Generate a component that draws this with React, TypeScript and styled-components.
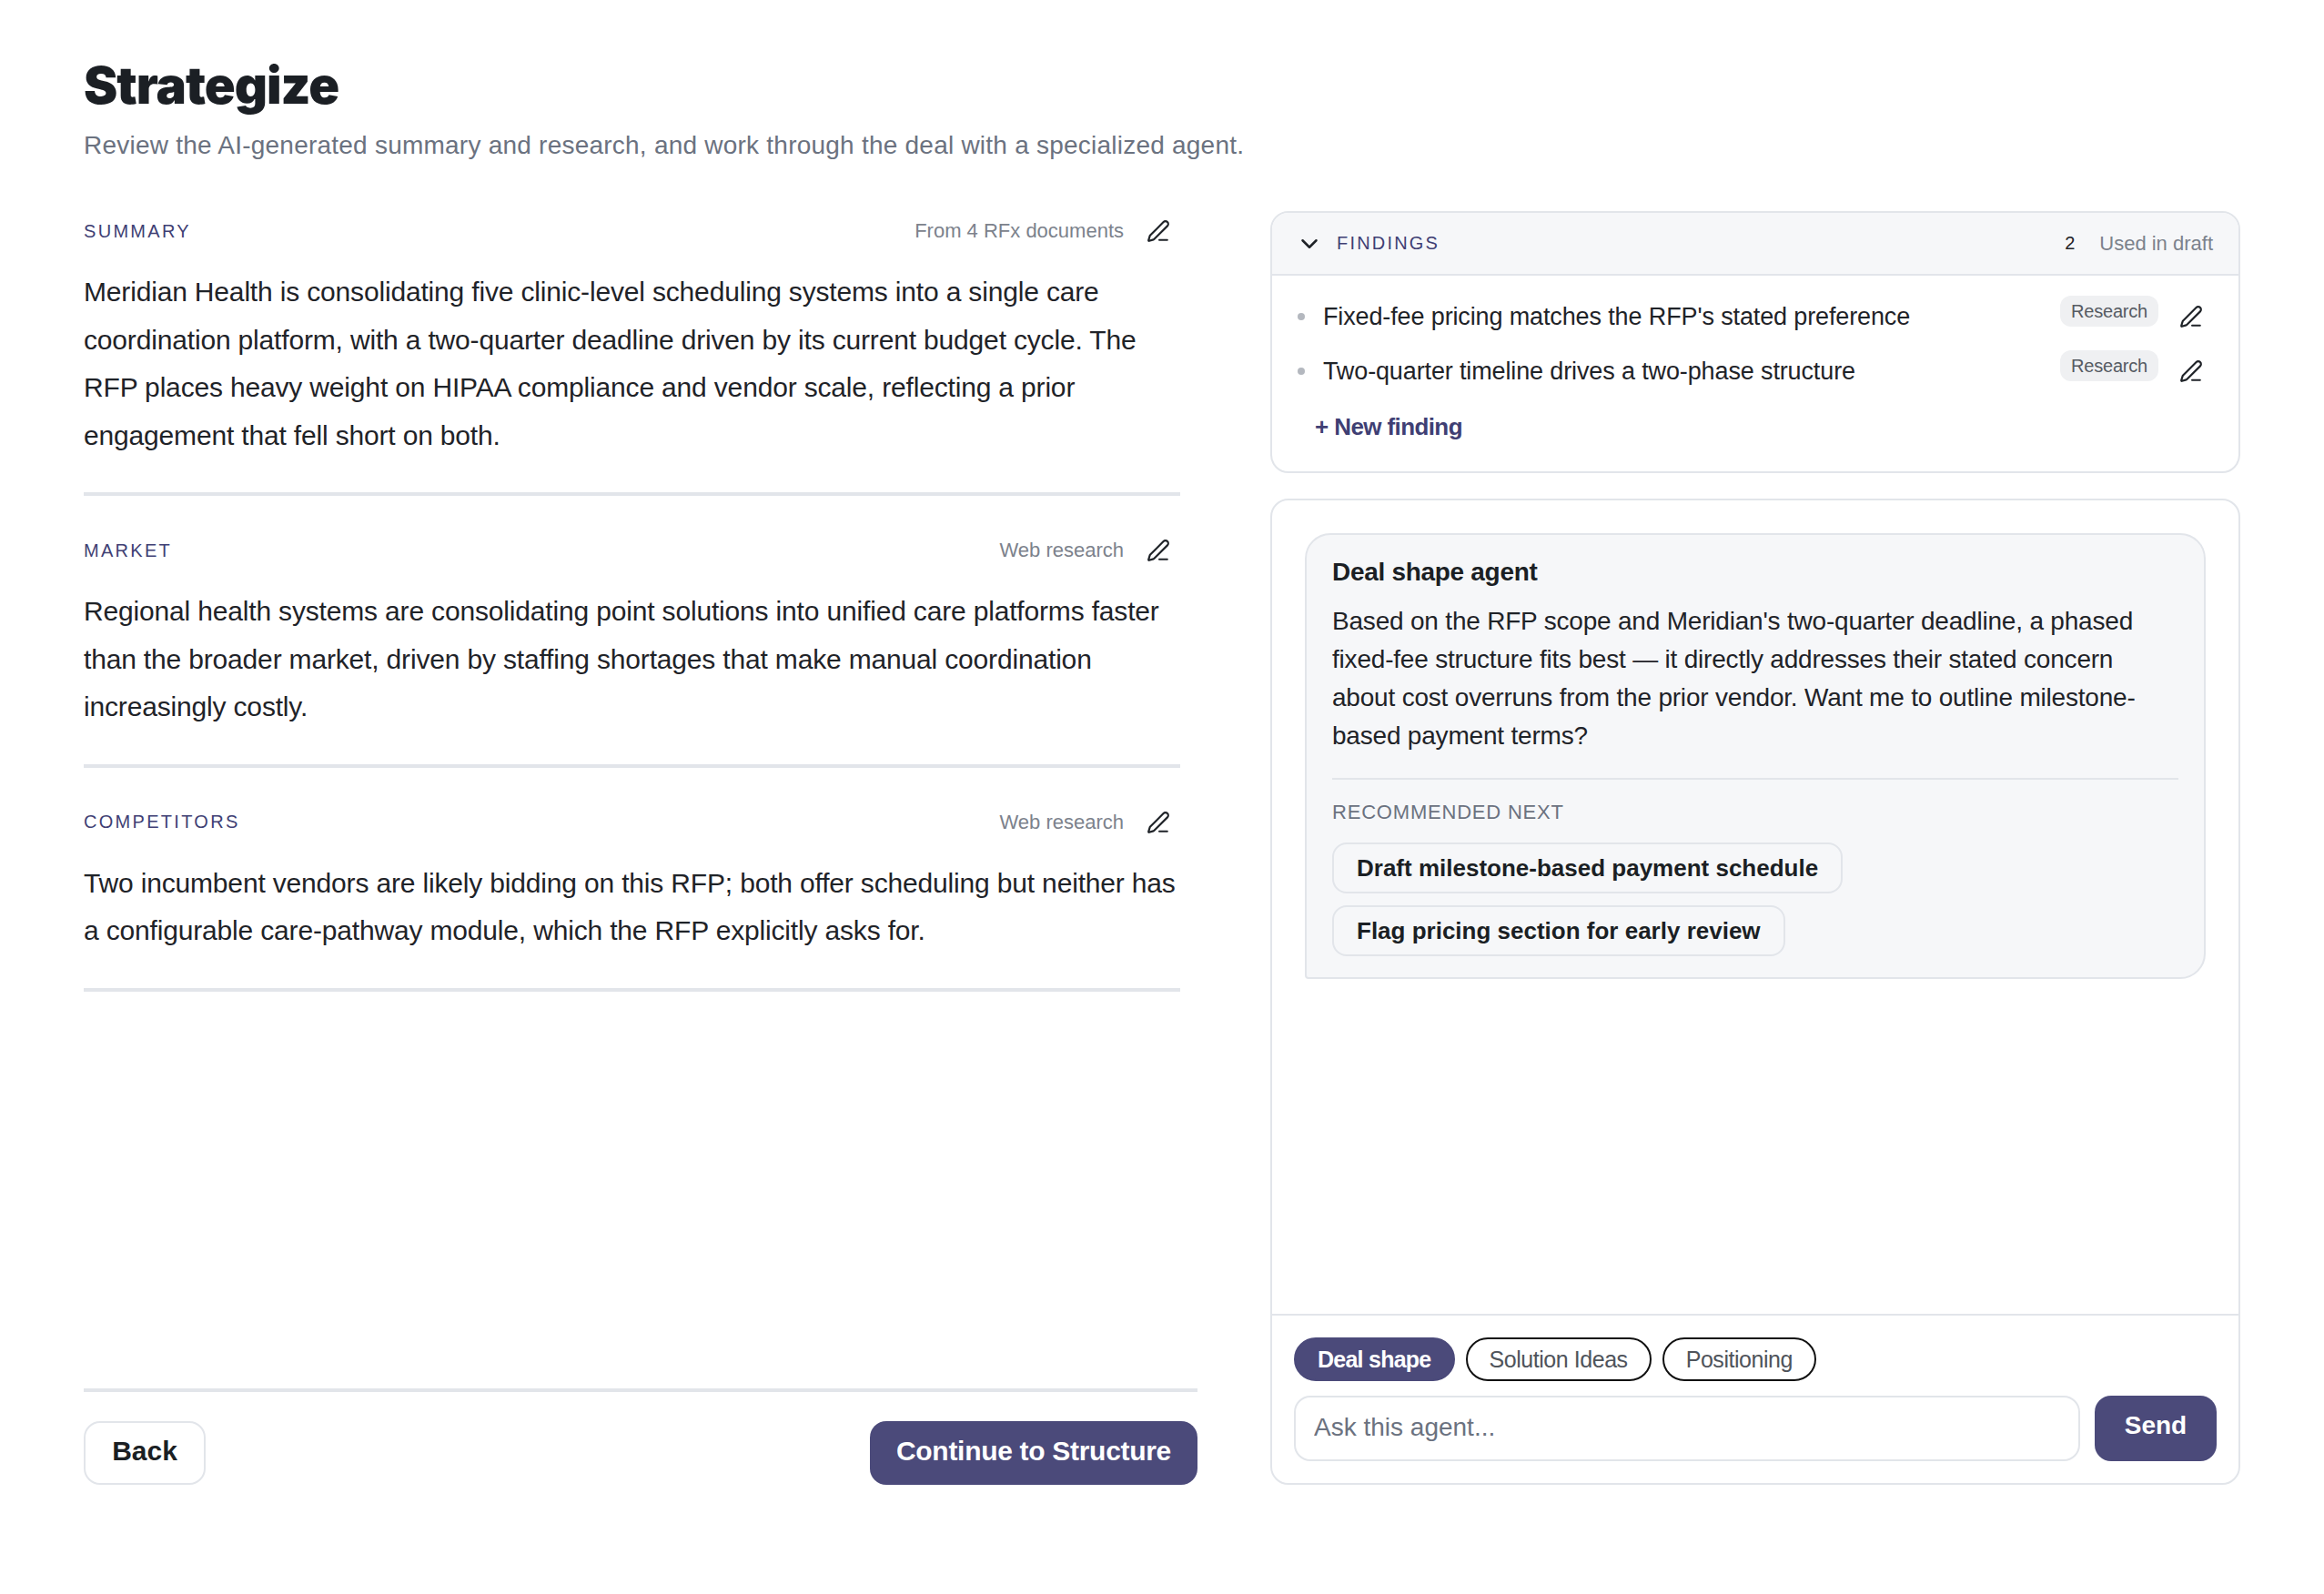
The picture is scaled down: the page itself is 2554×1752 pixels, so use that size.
import { ReactNode } from 'react';
import styled, { createGlobalStyle } from 'styled-components';
import { ChevronDown, PenLine } from 'lucide-react';

const GlobalStyle = createGlobalStyle`
  * { box-sizing: border-box; }
  html, body { margin: 0; padding: 0; background: #fff; }
  body { font-family: "Liberation Sans", Arial, sans-serif; color: #1f2328; }
  button, input { font-family: inherit; }
`;

const Page = styled.div`
  width: 2554px;
  height: 1752px;
  padding: 58px 92px 120px 92px;
  display: flex;
  flex-direction: column;
  overflow: hidden;
`;

const Title = styled.h1`
  margin: 0;
  font-family: Inter, sans-serif;
  font-size: 56px;
  font-weight: 900;
  line-height: 72px;
  letter-spacing: -1px;
  color: #1b1f24;
`;

const Subtitle = styled.p`
  margin: 8px 0 0;
  font-size: 28px;
  line-height: 44px;
  letter-spacing: 0.23px;
  color: #6b7280;
`;

const Columns = styled.div`
  flex: 1;
  min-height: 0;
  margin-top: 50px;
  display: grid;
  grid-template-columns: 1224px 1066px;
  column-gap: 80px;
`;

const LeftColumn = styled.div`
  display: flex;
  flex-direction: column;
  min-height: 0;
`;

const Section = styled.section`
  width: 1205px;
  padding-top: 6px;
  padding-bottom: 36px;
  margin-bottom: 38px;
  border-bottom: 4px solid #e2e5ea;
`;

const SectionHead = styled.div`
  height: 32px;
  display: flex;
  align-items: center;
  justify-content: space-between;
`;

const SectionLabel = styled.span`
  font-size: 20px;
  letter-spacing: 2.3px;
  text-transform: uppercase;
  color: #3f3f74;
`;

const SectionMeta = styled.div`
  display: flex;
  align-items: center;
  font-size: 22px;
  color: #7c828c;
`;

const EditButton = styled.button`
  width: 28px;
  height: 28px;
  margin-left: 24px;
  margin-right: 10px;
  padding: 0;
  border: none;
  background: none;
  color: #1f2328;
  display: flex;
  align-items: center;
  justify-content: center;
`;

const BodyText = styled.p`
  margin: 25px 0 0;
  font-size: 30px;
  line-height: 52.5px;
  letter-spacing: -0.17px;
  color: #1f2328;
`;

const Footer = styled.div`
  margin-top: auto;
  padding-top: 32px;
  border-top: 4px solid #e2e5ea;
  display: flex;
  justify-content: space-between;
`;

const BackButton = styled.button`
  width: 134px;
  height: 70px;
  padding: 0 0 4px;
  border: 2px solid #e2e5ea;
  border-radius: 18px;
  background: #fff;
  color: #1b1f24;
  font-size: 30px;
  font-weight: 700;
`;

const PrimaryButton = styled.button`
  width: 360px;
  height: 70px;
  padding: 0 0 4px;
  border: none;
  border-radius: 18px;
  background: #4b4a7a;
  color: #fff;
  font-size: 30px;
  font-weight: 700;
  letter-spacing: -0.3px;
`;

const RightColumn = styled.div`
  display: flex;
  flex-direction: column;
  gap: 28px;
  min-height: 0;
`;

const Card = styled.div`
  border: 2px solid #e2e5ea;
  border-radius: 20px;
  background: #fff;
  overflow: hidden;
`;

const FindingsHead = styled.div`
  height: 69px;
  padding: 0 28px 0 26px;
  background: #f6f7f9;
  border-bottom: 2px solid #e2e5ea;
  display: flex;
  align-items: center;
`;

const FindingsLabel = styled.span`
  margin-left: 15px;
  font-size: 20px;
  letter-spacing: 2.2px;
  color: #3f3f74;
`;

const FindingsCount = styled.span`
  margin-left: auto;
  font-size: 20px;
  color: #1f2328;
`;

const UsedInDraft = styled.span`
  margin-left: 27px;
  font-size: 22px;
  color: #7c828c;
`;

const FindingsBody = styled.div`
  padding: 15px 38px 33px 28px;
`;

const FindingRow = styled.div`
  height: 60px;
  display: flex;
  align-items: center;
`;

const Bullet = styled.span`
  width: 8px;
  height: 8px;
  border-radius: 50%;
  background: #b4b8bf;
`;

const FindingText = styled.span`
  margin-left: 20px;
  font-size: 27px;
  letter-spacing: -0.13px;
  color: #1f2328;
`;

const Tag = styled.span`
  margin-left: auto;
  margin-bottom: 12px;
  height: 34px;
  width: 108px;
  border-radius: 12px;
  background: #eff0f2;
  color: #565b63;
  font-size: 20px;
  letter-spacing: -0.2px;
  display: flex;
  align-items: center;
  justify-content: center;
`;

const FindingEdit = styled(EditButton)`
  margin-left: 22px;
  margin-right: 0;
`;

const NewFinding = styled.button`
  display: block;
  margin: 16px 0 0 19px;
  padding: 0;
  border: none;
  background: none;
  color: #3f3f74;
  font-size: 26px;
  font-weight: 700;
  letter-spacing: -0.6px;
`;

const AgentCard = styled(Card)`
  flex: 1;
  min-height: 0;
  display: flex;
  flex-direction: column;
`;

const Thread = styled.div`
  flex: 1;
  min-height: 0;
  padding: 36px 36px 0 36px;
`;

const Bubble = styled.div`
  padding: 21px 28px 23px 28px;
  background: #f6f7f9;
  border: 2px solid #e2e5ea;
  border-radius: 28px 28px 28px 4px;
`;

const BubbleTitle = styled.div`
  font-size: 28px;
  line-height: 40px;
  font-weight: 700;
  letter-spacing: -0.3px;
  color: #1b1f24;
`;

const BubbleText = styled.p`
  margin: 13px 0 0;
  font-size: 28px;
  line-height: 42px;
  letter-spacing: -0.2px;
  color: #1f2328;
`;

const BubbleDivider = styled.div`
  height: 2px;
  margin-top: 25px;
  background: #e2e5ea;
`;

const NextLabel = styled.div`
  margin-top: 22px;
  font-size: 22px;
  line-height: 28px;
  letter-spacing: 0.8px;
  color: #6b7280;
`;

const ChipList = styled.div`
  margin-top: 19px;
  display: flex;
  flex-direction: column;
  align-items: flex-start;
  gap: 13px;
`;

const Chip = styled.button`
  height: 56px;
  padding: 0 25px;
  border: 2px solid #e2e5ea;
  border-radius: 16px;
  background: #f6f7f9;
  color: #1b1f24;
  font-size: 26px;
  font-weight: 700;
`;

const Composer = styled.div`
  padding: 24px;
  border-top: 2px solid #e2e5ea;
`;

const AgentTabs = styled.div`
  display: flex;
  gap: 12px;
`;

const AgentTab = styled.button<{ $active?: boolean }>`
  height: 48px;
  padding: 0 24px;
  border: 2px solid ${({ $active }) => ($active ? '#4b4a7a' : '#111')};
  border-radius: 24px;
  background: ${({ $active }) => ($active ? '#4b4a7a' : '#fff')};
  color: ${({ $active }) => ($active ? '#fff' : '#4f545b')};
  font-size: 25px;
  font-weight: ${({ $active }) => ($active ? 700 : 400)};
  letter-spacing: ${({ $active }) => ($active ? '-0.75px' : '-0.45px')};
`;

const InputRow = styled.div`
  margin-top: 16px;
  display: flex;
  gap: 16px;
`;

const AskInput = styled.input`
  flex: 1;
  min-width: 0;
  height: 72px;
  padding: 0 20px 2px;
  border: 2px solid #e2e5ea;
  border-radius: 18px;
  font-size: 28px;
  color: #1f2328;
  &::placeholder { color: #6b7280; opacity: 1; }
`;

const SendButton = styled.button`
  width: 134px;
  height: 72px;
  padding: 0 0 6px;
  border: none;
  border-radius: 18px;
  background: #4b4a7a;
  color: #fff;
  font-size: 28px;
  font-weight: 700;
`;

const EditIcon = () => <PenLine size={26} strokeWidth={2} />;

const ResearchSection = ({ label, meta, children }: { label: string; meta: string; children: ReactNode }) => (
  <Section>
    <SectionHead>
      <SectionLabel>{label}</SectionLabel>
      <SectionMeta>
        {meta}
        <EditButton aria-label="Edit"><EditIcon /></EditButton>
      </SectionMeta>
    </SectionHead>
    <BodyText>{children}</BodyText>
  </Section>
);

const Finding = ({ text }: { text: string }) => (
  <FindingRow>
    <Bullet />
    <FindingText>{text}</FindingText>
    <Tag>Research</Tag>
    <FindingEdit aria-label="Edit"><EditIcon /></FindingEdit>
  </FindingRow>
);

export default function App() {
  return (
    <Page>
      <GlobalStyle />
      <Title>Strategize</Title>
      <Subtitle>Review the AI-generated summary and research, and work through the deal with a specialized agent.</Subtitle>
      <Columns>
        <LeftColumn>
          <ResearchSection label="Summary" meta="From 4 RFx documents">
            Meridian Health is consolidating five clinic-level scheduling systems into a single care coordination platform, with a two-quarter deadline driven by its current budget cycle. The RFP places heavy weight on HIPAA compliance and vendor scale, reflecting a prior engagement that fell short on both.
          </ResearchSection>
          <ResearchSection label="Market" meta="Web research">
            Regional health systems are consolidating point solutions into unified care platforms faster than the broader market, driven by staffing shortages that make manual coordination increasingly costly.
          </ResearchSection>
          <ResearchSection label="Competitors" meta="Web research">
            Two incumbent vendors are likely bidding on this RFP; both offer scheduling but neither has a configurable care-pathway module, which the RFP explicitly asks for.
          </ResearchSection>
          <Footer>
            <BackButton>Back</BackButton>
            <PrimaryButton>Continue to Structure</PrimaryButton>
          </Footer>
        </LeftColumn>
        <RightColumn>
          <Card>
            <FindingsHead>
              <ChevronDown size={30} strokeWidth={2} />
              <FindingsLabel>FINDINGS</FindingsLabel>
              <FindingsCount>2</FindingsCount>
              <UsedInDraft>Used in draft</UsedInDraft>
            </FindingsHead>
            <FindingsBody>
              <Finding text="Fixed-fee pricing matches the RFP's stated preference" />
              <Finding text="Two-quarter timeline drives a two-phase structure" />
              <NewFinding>+ New finding</NewFinding>
            </FindingsBody>
          </Card>
          <AgentCard>
            <Thread>
              <Bubble>
                <BubbleTitle>Deal shape agent</BubbleTitle>
                <BubbleText>
                  Based on the RFP scope and Meridian's two-quarter deadline, a phased fixed-fee structure fits best — it directly addresses their stated concern about cost overruns from the prior vendor. Want me to outline milestone-based payment terms?
                </BubbleText>
                <BubbleDivider />
                <NextLabel>RECOMMENDED NEXT</NextLabel>
                <ChipList>
                  <Chip>Draft milestone-based payment schedule</Chip>
                  <Chip>Flag pricing section for early review</Chip>
                </ChipList>
              </Bubble>
            </Thread>
            <Composer>
              <AgentTabs>
                <AgentTab $active>Deal shape</AgentTab>
                <AgentTab>Solution Ideas</AgentTab>
                <AgentTab>Positioning</AgentTab>
              </AgentTabs>
              <InputRow>
                <AskInput placeholder="Ask this agent..." />
                <SendButton>Send</SendButton>
              </InputRow>
            </Composer>
          </AgentCard>
        </RightColumn>
      </Columns>
    </Page>
  );
}
